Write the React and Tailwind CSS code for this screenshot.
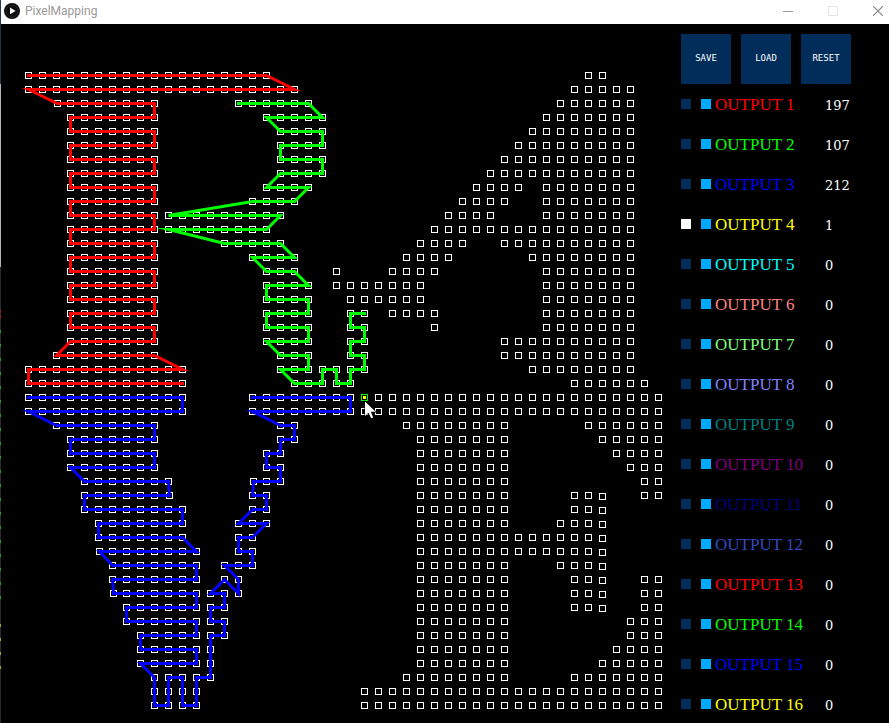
import React, { useState } from "react";

const PITCH = 14;
const ORIGIN_X = 28.5;
const ORIGIN_Y = 75.5;

// Column ranges [first, last] holding a pixel, one entry for each row.
const ROWS = [
  [[0, 17], [40, 41]],
  [[0, 19], [39, 43]],
  [[2, 9], [15, 20], [38, 43]],
  [[3, 9], [17, 21], [37, 43]],
  [[3, 9], [18, 21], [36, 43]],
  [[3, 9], [18, 21], [35, 43]],
  [[3, 9], [18, 21], [34, 43]],
  [[3, 9], [18, 21], [33, 43]],
  [[3, 9], [17, 20], [32, 35], [37, 43]],
  [[3, 9], [16, 19], [31, 34], [37, 43]],
  [[3, 9], [10, 18], [30, 33], [37, 43]],
  [[3, 9], [10, 17], [29, 43]],
  [[3, 9], [14, 18], [28, 31], [34, 43]],
  [[3, 9], [16, 19], [27, 30], [36, 43]],
  [[3, 9], [17, 19], [22, 22], [26, 29], [37, 43]],
  [[3, 9], [17, 20], [22, 28], [37, 43]],
  [[3, 9], [17, 20], [23, 28], [37, 43]],
  [[3, 9], [17, 20], [23, 24], [26, 29], [37, 43]],
  [[3, 9], [17, 20], [23, 24], [29, 29], [37, 43]],
  [[3, 9], [17, 20], [23, 24], [34, 43]],
  [[2, 9], [18, 20], [23, 24], [34, 43]],
  [[0, 11], [18, 24], [36, 43]],
  [[0, 11], [19, 23], [39, 44]],
  [[0, 11], [16, 23], [25, 45]],
  [[0, 11], [16, 45]],
  [[2, 9], [18, 19], [27, 34], [40, 45]],
  [[3, 9], [18, 19], [28, 34], [41, 45]],
  [[3, 9], [17, 18], [28, 34], [42, 45]],
  [[3, 9], [17, 18], [28, 34], [43, 45]],
  [[4, 10], [16, 18], [28, 34], [44, 45]],
  [[4, 10], [16, 17], [28, 34], [39, 41], [44, 45]],
  [[4, 11], [16, 17], [28, 34], [39, 41]],
  [[5, 11], [15, 17], [28, 34], [38, 41]],
  [[5, 11], [15, 16], [28, 41]],
  [[5, 12], [15, 16], [28, 41]],
  [[6, 12], [14, 16], [28, 34], [38, 41]],
  [[6, 12], [14, 15], [28, 34], [39, 41], [44, 45]],
  [[6, 12], [13, 15], [28, 34], [39, 41], [44, 45]],
  [[7, 12], [13, 14], [28, 34], [39, 41], [44, 45]],
  [[7, 12], [13, 14], [28, 34], [43, 45]],
  [[8, 12], [13, 14], [28, 34], [43, 45]],
  [[8, 12], [13, 13], [28, 34], [42, 45]],
  [[8, 12], [13, 13], [28, 34], [41, 45]],
  [[9, 13], [27, 34], [39, 45]],
  [[9, 12], [24, 45]],
  [[9, 12], [24, 45]],
];

// Pixels placed one unit off the regular grid: "column,row" -> [dx, dy].
const NUDGED = {
  "2,2": [1, 0], "10,30": [1, 0], "5,34": [1, 0], "6,37": [1, 0], "16,29": [1, 0],
};
for (let r = 30; r <= 38; r++) NUDGED[`41,${r}`] = [0, 1];

const point = (c, r) => {
  const [dx, dy] = NUDGED[`${c},${r}`] || [0, 0];
  return [ORIGIN_X + c * PITCH + dx, ORIGIN_Y + r * PITCH + dy];
};

const PIXELS = ROWS.flatMap((ranges, r) =>
  ranges.flatMap(([a, b]) => Array.from({ length: b - a + 1 }, (_, i) => [a + i, r]))
);

const redBody = [];
for (let r = 3; r <= 19; r++) {
  redBody.push(...(r % 2 ? [[9, r], [3, r]] : [[3, r], [9, r]]));
}

const WIRES = [
  {
    color: "#ff0000",
    path: [[0, 0], [17, 0], [19, 1], [0, 1], [2, 2], [9, 2], ...redBody,
      [2, 20], [9, 20], [11, 21], [0, 21], [0, 22], [11, 22]],
  },
  {
    color: "#00ff00",
    path: [[15, 2], [20, 2], [21, 3], [17, 3], [18, 4], [21, 4], [21, 5], [18, 5], [18, 6],
      [21, 6], [21, 7], [18, 7], [17, 8], [20, 8], [19, 9], [16, 9], [10, 10], [18, 10],
      [17, 11], [10, 11], [14, 12], [18, 12], [19, 13], [16, 13], [17, 14], [19, 14],
      [20, 15], [17, 15], [17, 16], [20, 16], [20, 17], [17, 17], [17, 18], [20, 18],
      [20, 19], [17, 19], [18, 20], [20, 20], [20, 21], [18, 21], [19, 22], [21, 22],
      [21, 21], [22, 21], [22, 22], [23, 22], [23, 21], [24, 21], [24, 20], [23, 20],
      [23, 19], [24, 19], [24, 18], [23, 18], [23, 17], [24, 17]],
  },
  {
    color: "#0000ff",
    path: [[0, 23], [11, 23], [11, 24], [0, 24], [2, 25], [9, 25], [9, 26], [3, 26], [3, 27],
      [9, 27], [9, 28], [3, 28], [4, 29], [10, 29], [10, 30], [4, 30], [4, 31], [11, 31],
      [11, 32], [5, 32], [5, 33], [11, 33], [12, 34], [5, 34], [6, 35], [12, 35], [12, 36],
      [6, 36], [6, 37], [12, 37], [12, 38], [7, 38], [7, 39], [12, 39], [12, 40], [8, 40],
      [8, 41], [12, 41], [12, 42], [8, 42], [9, 43], [9, 45], [10, 45], [10, 43], [11, 43],
      [11, 45], [12, 45], [12, 43], [13, 43], [13, 40], [14, 40], [14, 39], [13, 39],
      [13, 38], [14, 38], [14, 37], [13, 37], [14, 36], [15, 37], [15, 36], [14, 35],
      [16, 35], [16, 34], [15, 34], [15, 33], [16, 33], [17, 32], [15, 32], [16, 31],
      [17, 31], [17, 30], [16, 30], [16, 29], [18, 29], [18, 28], [17, 28], [17, 27],
      [18, 27], [18, 26], [19, 26], [19, 25], [18, 25], [16, 24], [23, 24], [23, 23],
      [16, 23]],
  },
];

// Coloured marks of the window behind, showing along the left edge.
const EDGE_MARKS = [
  ...[44, 49].map((y) => [y, "#a02020"]),
  ...Array.from({ length: 20 }, (_, i) => [64 + i * 14, "#20a020"]),
  ...Array.from({ length: 4 }, (_, i) => [358 + i * 14, "#a8a020"]),
];

const OUTPUTS = [
  ["text-[#ff0000]", 197], ["text-[#00ff00]", 107], ["text-[#0000ff]", 212], ["text-[#ffff00]", 1],
  ["text-[#00ffff]", 0], ["text-[#ff8080]", 0], ["text-[#80ff80]", 0], ["text-[#8080ff]", 0],
  ["text-[#008080]", 0], ["text-[#800080]", 0], ["text-[#000080]", 0], ["text-[#3448c0]", 0],
  ["text-[#ff0000]", 0], ["text-[#00ff00]", 0], ["text-[#0000ff]", 0], ["text-[#ffff00]", 0],
];

function TitleBar() {
  return (
    <header className="flex h-6 items-center bg-white pl-[3px]">
      <svg className="mb-0.5 h-4 w-4" viewBox="0 0 16 16" aria-hidden="true">
        <circle cx="8" cy="8" r="8" fill="#0c0c0c" />
        <circle cx="8" cy="8" r="6" fill="none" stroke="#262626" />
        <path d="M6 4.6 L11.6 8 L6 11.2 Z" fill="#fff" />
      </svg>
      <h1 className="mb-0.5 ml-[5px] flex-1 font-['Roboto',sans-serif] text-[12px] leading-4 text-[#999999]">
        PixelMapping
      </h1>
      <div className="mb-0.5 flex gap-[35px] pr-[6px]">
        <button type="button" aria-label="Minimize">
          <svg className="block h-[10px] w-[10px]" viewBox="0 0 10 10">
            <path d="M0 5.5H10" stroke="#999" />
          </svg>
        </button>
        <button type="button" aria-label="Maximize" disabled>
          <svg className="block h-[10px] w-[10px]" viewBox="0 0 10 10">
            <rect x=".5" y=".5" width="9" height="9" fill="none" stroke="#e6e6e6" />
          </svg>
        </button>
        <button type="button" aria-label="Close">
          <svg className="block h-[10px] w-[10px]" viewBox="0 0 10 10">
            <path d="M0 0L10 10M10 0L0 10" stroke="#808080" strokeWidth="1.1" />
          </svg>
        </button>
      </div>
    </header>
  );
}

function PixelCanvas() {
  const [hx, hy] = point(24, 23);
  return (
    <svg className="block h-auto w-full" viewBox="1 24 680 699" role="img" aria-label="Pixel layout">
      {PIXELS.map(([c, r]) => {
        const [x, y] = point(c, r);
        return <rect key={`${c},${r}`} x={x - 3} y={y - 3} width="6" height="6" fill="#000" stroke="#fff" />;
      })}
      {WIRES.map(({ color, path }) => (
        <polyline
          key={color}
          points={path.map(([c, r]) => point(c, r).join(",")).join(" ")}
          fill="none"
          stroke={color}
          strokeWidth="3"
          strokeLinejoin="miter"
          strokeMiterlimit="10"
          strokeLinecap="square"
        />
      ))}
      <rect x={hx - 3} y={hy - 3} width="6" height="6" fill="#000" stroke="#00ff00" />
      <rect x={hx - 1.5} y={hy - 1.5} width="3" height="3" fill="#ffff00" />
      <path
        d="M364.5 400 V417 L368.5 413.5 L371 419.5 L374.5 418 L372 412.5 H377 Z"
        fill="#000"
      />
      <path
        d="M365 401.5 V416 L368.4 412.8 L371.2 418.2 L373.2 417.4 L370.8 411.8 H375.6 Z"
        fill="#fff"
      />
    </svg>
  );
}

function OutputRow({ index, color, count, selected, onSelect }) {
  const id = `output-${index}`;
  return (
    <li className="flex h-5 items-center">
      <input
        type="radio"
        name="active-output"
        aria-label={`Select output ${index}`}
        checked={selected}
        onChange={onSelect}
        className="h-[10px] w-[10px] appearance-none bg-[#002d5a] checked:bg-white"
      />
      <input
        id={id}
        type="checkbox"
        defaultChecked
        className="ml-[10px] h-[10px] w-[10px] appearance-none bg-[#002d5a] checked:bg-[#00aaff]"
      />
      <div className="ml-1 flex items-baseline pt-0.5 leading-5">
        <label htmlFor={id} className={`w-[110px] font-['Liberation_Serif',serif] text-[17px] ${color}`}>
          OUTPUT {index}
        </label>
        <output htmlFor={id} className="font-['DejaVu_Serif',serif] text-[13px] text-white">
          {count}
        </output>
      </div>
    </li>
  );
}

export default function App() {
  const [active, setActive] = useState(4);
  return (
    <div className="flex min-h-screen bg-black">
      <div className="flex w-px flex-col">
        <div className="h-[84px] bg-[#22384f]" />
        <div className="h-[183px] bg-[#b4b4b4]" />
        <div className="flex-1 bg-[#2b2b2b]">
          <svg className="block h-[456px] w-px" viewBox="0 0 1 456" aria-hidden="true">
            {EDGE_MARKS.map(([y, fill]) => (
              <rect key={y} x="0" y={y - 1} width="1" height="3" fill={fill} />
            ))}
          </svg>
        </div>
      </div>
      <div className="min-w-0 flex-1">
        <TitleBar />
        <main className="flex">
          <div className="min-w-0 flex-1">
            <PixelCanvas />
          </div>
          <aside className="w-52 pt-[10px]">
            <div className="flex gap-[10px]">
              {["SAVE", "LOAD", "RESET"].map((name) => (
                <button
                  key={name}
                  type="button"
                  className="h-[50px] w-[50px] bg-[#002d5a] font-['DejaVu_Sans_Mono',monospace] text-[9px] text-white"
                >
                  {name}
                </button>
              ))}
            </div>
            <ul className="mt-[10px] flex flex-col gap-5">
              {OUTPUTS.map(([color, count], i) => (
                <OutputRow
                  key={i}
                  index={i + 1}
                  color={color}
                  count={count}
                  selected={active === i + 1}
                  onSelect={() => setActive(i + 1)}
                />
              ))}
            </ul>
          </aside>
        </main>
      </div>
    </div>
  );
}
